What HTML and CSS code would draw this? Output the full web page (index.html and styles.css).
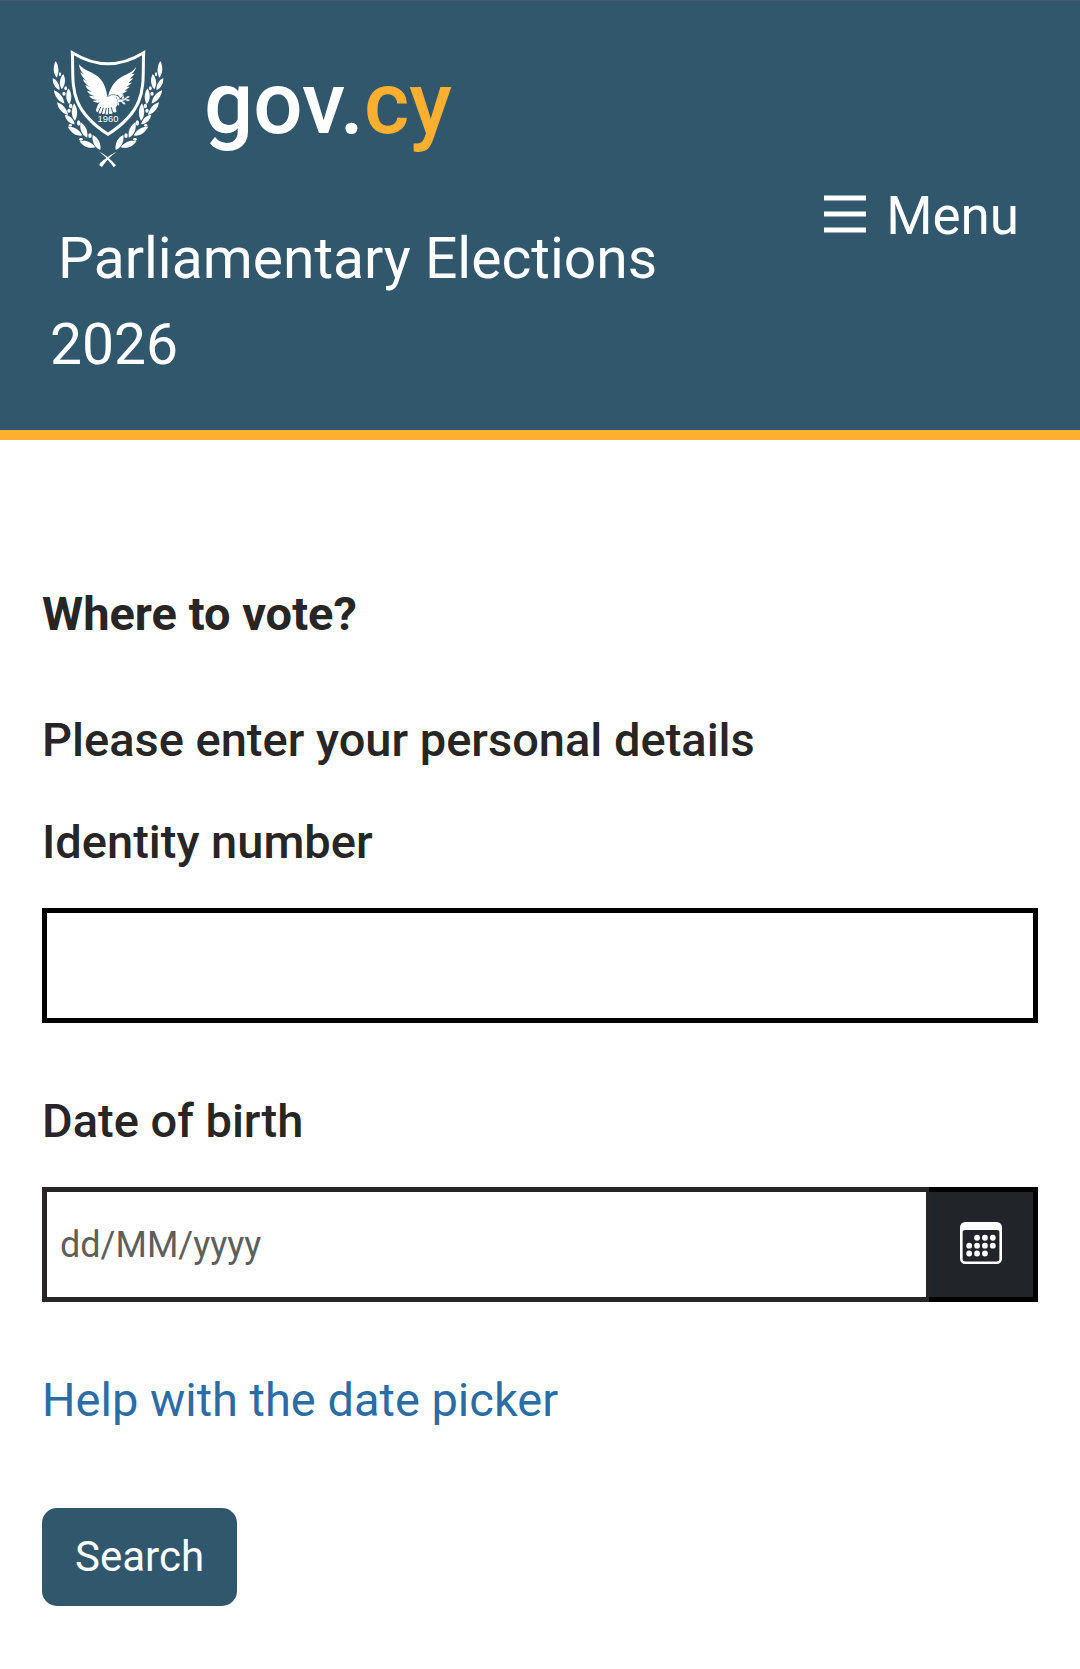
FILE: index.html
```html
<!DOCTYPE html>
<html lang="en">
<head>
<meta charset="utf-8">
<meta name="viewport" content="width=device-width, initial-scale=1">
<title>Parliamentary Elections 2026</title>
<link rel="stylesheet" href="styles.css">
</head>
<body>
<header class="site-header">
  <div class="brand">
    <a class="logo" href="#" aria-label="gov.cy home">
      <svg class="emblem" viewBox="36 40 336 357" aria-hidden="true">
        <defs>
          <path id="leaf" d="M0-23C12-10 12 9 1 23C-12 10-11-8 0-23Z"/>
          <g id="branch">
            <use href="#leaf" transform="translate(48 101) rotate(-3) scale(.8 1.1)"/>
            <use href="#leaf" transform="translate(67 138) rotate(6) scale(.85 1)"/>
            <use href="#leaf" transform="translate(48 145) rotate(-28) scale(.75 .9)"/>
            <use href="#leaf" transform="translate(57 184) rotate(-38) scale(.85 1.1)"/>
            <use href="#leaf" transform="translate(86 182) rotate(-2) scale(.85 1.05)"/>
            <use href="#leaf" transform="translate(67 219) rotate(-40) scale(.85 1.1)"/>
            <use href="#leaf" transform="translate(103 229) rotate(-2) scale(.9 1.15)"/>
            <use href="#leaf" transform="translate(89 252) rotate(-45) scale(.8 .9)"/>
            <use href="#leaf" transform="translate(105 287) rotate(-58) scale(.95 1.1)"/>
            <use href="#leaf" transform="translate(131 283) rotate(-22) scale(.95 1.1)"/>
            <use href="#leaf" transform="translate(142 326) rotate(-68) scale(.95 1.1)"/>
            <use href="#leaf" transform="translate(169 321) rotate(-26) scale(1 1.1)"/>
            <ellipse cx="60" cy="116" rx="3" ry="6"/>
            <ellipse cx="77" cy="158" rx="4" ry="6"/>
            <ellipse cx="72" cy="174" rx="5" ry="6"/>
            <ellipse cx="92" cy="211" rx="5" ry="7"/>
            <ellipse cx="87" cy="225" rx="5" ry="6"/>
            <ellipse cx="91" cy="269" rx="5" ry="4"/>
            <ellipse cx="116" cy="262" rx="5" ry="8"/>
            <ellipse cx="150" cy="300" rx="5" ry="7"/>
            <ellipse cx="123" cy="311" rx="6" ry="4"/>
          </g>
        </defs>
        <g fill="#fff">
          <use href="#branch"/>
          <use href="#branch" transform="translate(408 0) scale(-1 1)"/>
          <path d="M97 51Q204 117 311 51C306 143 329 215 204 296C79 215 102 143 97 51Z" fill="none" stroke="#fff" stroke-width="9"/>
          <path d="M117 86C138 112 172 108 190 143C197 156 199 168 202 181L187 194C179 204 168 202 158 196L172 193C160 192 151 187 147 180L164 182C153 178 144 172 141 165L156 169C145 163 137 156 136 148L150 154C138 147 131 139 129 130L143 138C131 130 123 119 121 109L134 118C124 109 118 100 117 86Z"/>
          <path d="M288 94C274 117 247 115 225 140C214 152 208 167 204 183L226 178Q237 175 240 188L252 177L246 175L263 165L254 165L270 153L260 154L276 141L265 142L280 128L270 129L284 114L275 115C283 108 287 101 288 94Z"/>
          <path d="M180 198C194 182 210 175 227 179C238 182 241 190 239 197C235 206 230 211 227 216Q230 225 229 229Q224 232 220 228Q218 236 211 235Q206 234 204 236Q197 237 194 234Q188 237 183 233Q177 235 174 230Q167 229 168 222Q171 208 180 198Z"/>
          <path d="M232 192C240 190 249 192 256 187Q262 178 270 182Q265 190 258 190Q265 190 271 193Q263 201 256 193L248 197Q257 199 256 207Q247 207 244 199L236 200Q240 205 236 212Q229 206 232 199ZM245 190Q243 183 250 180Q256 185 251 190Z" stroke="#31576d" stroke-width="1"/>
          <path d="M178 348Q202 359 228 389L221 395L214 385Q198 362 178 348Z"/>
          <path d="M230 348Q206 359 180 382L178 389L186 394L193 384Q209 362 230 348Z"/>
          <text class="emblem-year" x="204" y="260" text-anchor="middle">1960</text>
        </g>
        <g stroke="#31576d" stroke-width="3" fill="none">
          <path d="M174 232L182 214M184 235L190 216M195 236L199 217M206 236V217M218 231L214 215"/>
          <path d="M202 183Q214 175 226 177" stroke-width="2"/>
          <circle cx="229" cy="187" r="1" stroke-width="2"/>
        </g>
      </svg>
      <span class="wordmark">gov.<span class="wordmark-accent">cy</span></span>
    </a>
    <a class="service-name" href="#">Parliamentary Elections 2026</a>
  </div>
  <button class="menu-button" type="button">
    <svg class="menu-icon" viewBox="0 0 42 38" aria-hidden="true"><path d="M0 3H42M0 19H42M0 35H42" stroke="#fff" stroke-width="5"/></svg>
    Menu
  </button>
</header>
<main class="content">
  <h1 class="title">Where to vote?</h1>
  <form class="form">
    <h2 class="subtitle">Please enter your personal details</h2>
    <label class="label" for="identity">Identity number</label>
    <input class="field" id="identity" type="text">
    <label class="label label-date" for="birth">Date of birth</label>
    <div class="date-group">
      <input class="field date-field" id="birth" type="text" placeholder="dd/MM/yyyy">
      <button class="date-button" type="button" aria-label="Choose date">
        <svg class="calendar-icon" viewBox="0 0 16 16" fill="#fff" aria-hidden="true">
          <path fill-rule="evenodd" d="M2 0H14A2 2 0 0 1 16 2V14A2 2 0 0 1 14 16H2A2 2 0 0 1 0 14V2A2 2 0 0 1 2 0ZM2 3Q1 3 1 3.9V14.1Q1 15 2 15H14Q15 15 15 14.1V3.9Q15 3 14 3Z"/>
          <g><circle cx="6.5" cy="6" r="1.1"/><circle cx="9.5" cy="6" r="1.1"/><circle cx="12.5" cy="6" r="1.1"/><circle cx="3.5" cy="9" r="1.1"/><circle cx="6.5" cy="9" r="1.1"/><circle cx="9.5" cy="9" r="1.1"/><circle cx="12.5" cy="9" r="1.1"/><circle cx="3.5" cy="12" r="1.1"/><circle cx="6.5" cy="12" r="1.1"/><circle cx="9.5" cy="12" r="1.1"/></g>
        </svg>
      </button>
    </div>
    <a class="help-link" href="#">Help with the date picker</a>
    <button class="search-button" type="submit">Search</button>
  </form>
</main>
</body>
</html>
```
FILE: styles.css
```css
* { box-sizing: border-box; }

body {
  margin: 0;
  background: #fff;
  color: #272525;
  font-family: Roboto, "Liberation Sans", sans-serif;
  font-size: 47px;
  line-height: 70px;
}

button, input { font-family: inherit; }

.site-header {
  display: flex;
  align-items: center;
  justify-content: space-between;
  padding: 48px 61px 42px 50px;
  background: #31576d;
  border-top: 1px solid #4a5a64;
  border-bottom: 10px solid #ffaf30;
  color: #fff;
}

.brand { flex: 0 1 660px; }

.logo {
  display: flex;
  align-items: flex-start;
  gap: 40px;
  height: 119px;
  margin-bottom: 48px;
  color: #fff;
  text-decoration: none;
}

.emblem { width: 112px; height: 119px; margin-left: 2px; }

.emblem-year { font: 28px "Liberation Sans", sans-serif; }

.wordmark { font-size: 87px; font-weight: 500; line-height: 108px; }

.wordmark-accent { color: #ffaf30; }

.service-name {
  display: block;
  color: #fff;
  font-size: 57px;
  line-height: 86px;
  text-indent: 8px;
  text-decoration: none;
}

.menu-button {
  display: flex;
  align-items: center;
  gap: 20px;
  padding: 0 0 6px;
  border: 0;
  background: none;
  color: #fff;
  font-size: 53px;
  line-height: 64px;
}

.menu-icon { width: 42px; height: 38px; margin-bottom: 4px; }

.content { padding: 139px 42px 62px; }

.title {
  margin: 0 0 56px;
  font-size: 47px;
  font-weight: 700;
  line-height: 70px;
}

.form {
  display: flex;
  flex-direction: column;
  align-items: flex-start;
}

.subtitle {
  margin: 0 0 32px;
  font-size: 47px;
  font-weight: 500;
}

.label {
  margin-bottom: 31px;
  font-weight: 500;
}

.label-date { margin-top: 63px; }

.field {
  width: 100%;
  height: 115px;
  padding: 0 13px;
  border: 5px solid #000;
  border-radius: 0;
  background: #fff;
  color: #272525;
  font-size: 36px;
  outline: none;
}

.field::placeholder { color: #5e5e5e; opacity: 1; }

.date-group { display: flex; width: 100%; }

.date-field {
  flex: 1;
  min-width: 0;
  border-color: #272525;
  border-right-width: 3px;
}

.date-button {
  display: flex;
  align-items: center;
  justify-content: center;
  width: 109px;
  height: 115px;
  padding: 0 0 4px;
  border: 5px solid #000;
  border-left: 0;
  background: #212529;
}

.calendar-icon { width: 42px; height: 42px; }

.help-link {
  margin: 63px 0 73px;
  color: #2b6ca5;
  text-decoration: none;
}

.search-button {
  padding: 0 33px;
  border: 0;
  border-radius: 15px;
  background: #31576d;
  color: #fff;
  font-size: 42px;
  line-height: 98px;
}
```
